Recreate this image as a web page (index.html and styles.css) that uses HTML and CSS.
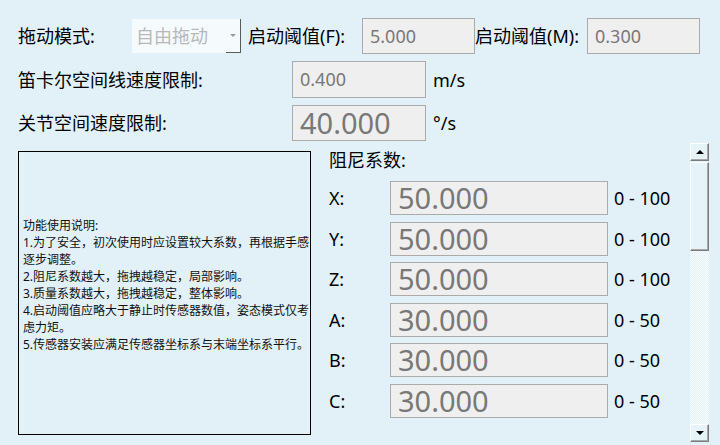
FILE: index.html
```html
<!DOCTYPE html>
<html>
<head>
    <meta charset="UTF-8">
    <meta name="viewport" content="width=device-width, initial-scale=1.0">
    <title>拖动参数设置</title>
    <link rel="stylesheet" href="styles.css">
</head>
<body>
    <div class="panel">
        <div class="top-row">
            <span class="label mode-label">拖动模式:</span>
            <div class="combo">
                <span class="combo-text">自由拖动</span>
                <span class="combo-btn"><span class="combo-arrow"></span></span>
            </div>
            <span class="label f-label">启动阈值(F):</span>
            <div class="field thresh">5.000</div>
            <span class="label m-label">启动阈值(M):</span>
            <div class="field thresh">0.300</div>
        </div>

        <div class="limit-row first">
            <span class="label limit-label">笛卡尔空间线速度限制:</span>
            <div class="field limit">0.400</div>
            <span class="unit">m/s</span>
        </div>
        <div class="limit-row">
            <span class="label limit-label">关节空间速度限制:</span>
            <div class="field limit big">40.000</div>
            <span class="unit">°/s</span>
        </div>

        <div class="bottom">
            <div class="help">
                <p>
                    功能使用说明:<br>
                    1.为了安全，初次使用时应设置较大系数，再根据手感<br>
                    逐步调整。<br>
                    2.阻尼系数越大，拖拽越稳定，局部影响。<br>
                    3.质量系数越大，拖拽越稳定，整体影响。<br>
                    4.启动阈值应略大于静止时传感器数值，姿态模式仅考<br>
                    虑力矩。<br>
                    5.传感器安装应满足传感器坐标系与末端坐标系平行。
                </p>
            </div>

            <div class="damping">
                <div class="damping-title">阻尼系数:</div>
                <div class="damping-grid">
                    <span class="axis">X:</span><div class="field coef">50.000</div><span class="range">0 - 100</span>
                    <span class="axis">Y:</span><div class="field coef">50.000</div><span class="range">0 - 100</span>
                    <span class="axis">Z:</span><div class="field coef">50.000</div><span class="range">0 - 100</span>
                    <span class="axis">A:</span><div class="field coef">30.000</div><span class="range">0 - 50</span>
                    <span class="axis">B:</span><div class="field coef">30.000</div><span class="range">0 - 50</span>
                    <span class="axis">C:</span><div class="field coef">30.000</div><span class="range">0 - 50</span>
                </div>
            </div>

            <div class="scrollbar">
                <div class="sb-btn"><span class="arrow-up"></span></div>
                <div class="sb-thumb"></div>
                <div class="sb-track"></div>
                <div class="sb-btn"><span class="arrow-down"></span></div>
            </div>
        </div>
    </div>
</body>
</html>
```

FILE: styles.css
```css
html, body {
    margin: 0;
    padding: 0;
}
body {
    width: 720px;
    height: 445px;
    overflow: hidden;
    background-color: #e2f1f8;
    color: #000;
    font-family: "Noto Sans", "Noto Sans CJK SC", sans-serif;
    font-size: 18px;
    line-height: 24px;
}
.panel {
    padding-left: 18px;
}
.label {
    white-space: nowrap;
}

/* first line: mode and thresholds */
.top-row {
    display: flex;
    align-items: center;
    height: 36px;
    padding-top: 18px;
}
.mode-label {
    width: 114px;
}
.combo {
    display: flex;
    width: 109px;
    height: 34px;
    margin-right: 7px;
    background-color: #f5fafc;
}
.combo-text {
    flex: 1;
    padding-left: 4px;
    line-height: 34px;
    color: #b8b8b8;
}
.combo-btn {
    display: flex;
    align-items: center;
    justify-content: center;
    width: 14px;
    border-right: 1px solid #5a5a5a;
    border-bottom: 1px solid #5a5a5a;
}
.combo-arrow {
    width: 0;
    height: 0;
    border-left: 3px solid transparent;
    border-right: 3px solid transparent;
    border-top: 3px solid #9a9a9a;
    margin-top: -1px;
}
.f-label {
    width: 114px;
}
.m-label {
    width: 112px;
}

/* read-only number boxes */
.field {
    box-sizing: border-box;
    border: 1px solid #ababab;
    background-color: #efefef;
    color: #787878;
    padding-left: 7px;
    white-space: nowrap;
}
.thresh {
    width: 113px;
    height: 36px;
    line-height: 34px;
}

/* speed limits */
.limit-row {
    display: flex;
    align-items: center;
    margin-top: 7px;
}
.limit-row.first {
    height: 37px;
}
.limit-label {
    width: 274px;
}
.limit {
    width: 134px;
    height: 100%;
    line-height: 34px;
}
.limit-row:not(.first) {
    height: 36px;
}
.big {
    font-size: 29px;
    line-height: 33px;
}
.unit {
    margin-left: 7px;
}

/* lower part: help text, damping values, scrollbar */
.bottom {
    display: flex;
    margin-top: 2px;
    height: 299px;
}
.help {
    box-sizing: border-box;
    display: flex;
    align-items: center;
    width: 293px;
    height: 284px;
    margin-top: 8px;
    padding: 0 0 16px 4px;
    border: 1px solid #000;
}
.help p {
    margin: 0;
    font-size: 12px;
    line-height: 17px;
    white-space: nowrap;
    color: #111;
}
.damping {
    flex: 1;
    padding-left: 18px;
}
.damping-title {
    margin-top: 5px;
}
.damping-grid {
    display: grid;
    grid-template-columns: 55px 218px auto;
    grid-auto-rows: 34px;
    row-gap: 6.6px;
    column-gap: 6px;
    align-items: center;
    margin-top: 9px;
}
.coef {
    height: 34px;
    font-size: 29px;
    line-height: 32px;
    grid-column: 2;
}

.scrollbar {
    display: flex;
    flex-direction: column;
    width: 19px;
    margin-right: 11px;
}
.sb-btn,
.sb-thumb {
    box-sizing: border-box;
    background-color: #e6f3f8;
    border: 1px solid;
    border-color: #fff #7c7c7c #7c7c7c #fff;
    box-shadow: inset -1px -1px #a8a8a8;
}
.sb-btn {
    display: flex;
    align-items: center;
    justify-content: center;
    height: 18px;
}
.sb-thumb {
    height: 89px;
    margin-top: 1px;
}
.sb-track {
    flex: 1;
    background-color: #ecf6fa;
    background-image: repeating-conic-gradient(#f6fbfd 0 25%, #e4f2f8 0 50%);
    background-size: 2px 2px;
}
.arrow-up,
.arrow-down {
    width: 0;
    height: 0;
    border-left: 4px solid transparent;
    border-right: 4px solid transparent;
}
.arrow-up {
    border-bottom: 4px solid #000;
}
.arrow-down {
    border-top: 4px solid #000;
}
```
